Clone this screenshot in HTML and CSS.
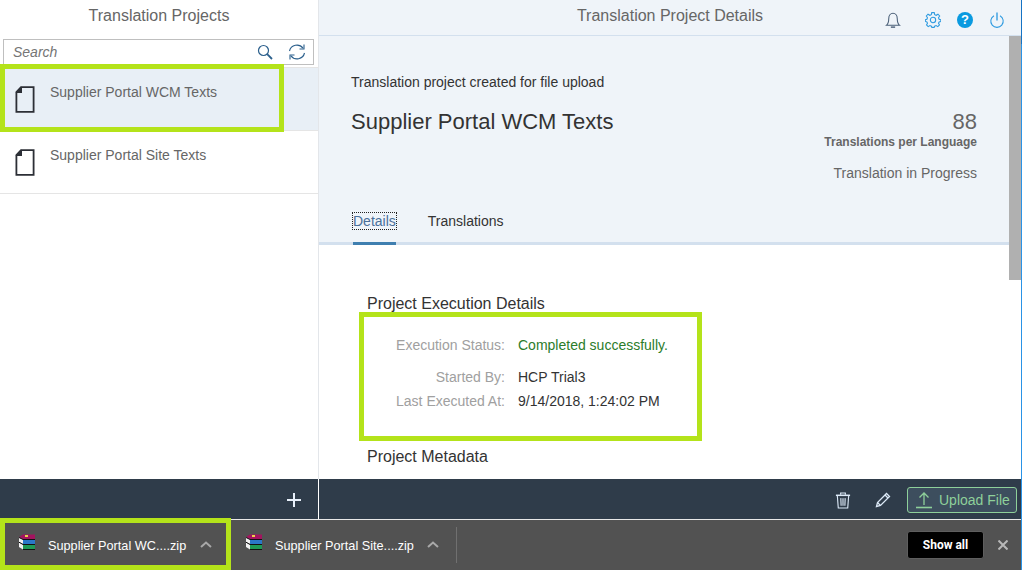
FILE: index.html
```html
<!DOCTYPE html>
<html lang="en">
<head>
    <meta charset="UTF-8">
    <meta name="viewport" content="width=device-width, initial-scale=1.0">
    <title>Translation Projects</title>
    <link rel="stylesheet" href="styles.css">
</head>
<body>

    <div class="window">
        <div class="app">
            <!-- Master list -->
            <div class="master">
                <div class="pane-title">Translation Projects</div>
                <div class="search">
                    <span class="search-text">Search</span>
                    <svg class="search-icon" width="16" height="16" viewBox="0 0 16 16" fill="none" stroke="#2b5f8c" stroke-width="1.2">
                        <circle cx="6.5" cy="6.5" r="5"/>
                        <path d="M10.2 10.2L15 15" stroke-width="1.8"/>
                    </svg>
                    <svg class="refresh-icon" width="18" height="18" viewBox="0 0 18 18" fill="none" stroke="#2b5f8c" stroke-width="1.1">
                        <path d="M1.5 8A7.6 7.6 0 0 1 15 5.2"/>
                        <path d="M16 1.5V6H11.5"/>
                        <path d="M16.5 10A7.6 7.6 0 0 1 3 12.8"/>
                        <path d="M2 16.5V12H6.5"/>
                    </svg>
                </div>
                <div class="project-list">
                    <div class="project selected">
                        <svg class="doc-icon" width="20" height="27" viewBox="0 0 20 27">
                            <path d="M6 1.2H18.6V25.8H1.4V6Z" fill="none" stroke="#2c2f36" stroke-width="1.8"/>
                            <path d="M7 0.5L0.5 7H7Z" fill="#2c2f36"/>
                        </svg>
                        <span class="project-name">Supplier Portal WCM Texts</span>
                    </div>
                    <div class="project">
                        <svg class="doc-icon" width="20" height="27" viewBox="0 0 20 27">
                            <path d="M6 1.2H18.6V25.8H1.4V6Z" fill="none" stroke="#2c2f36" stroke-width="1.8"/>
                            <path d="M7 0.5L0.5 7H7Z" fill="#2c2f36"/>
                        </svg>
                        <span class="project-name">Supplier Portal Site Texts</span>
                    </div>
                </div>
                <div class="footer master-footer">
                    <svg width="14" height="14" viewBox="0 0 14 14"><path d="M7 0V14M0 7H14" stroke="#e8f0fa" stroke-width="2"/></svg>
                </div>
            </div>

            <!-- Detail pane -->
            <div class="detail">
                <div class="detail-bar">
                    <span class="detail-title">Translation Project Details</span>
                    <div class="bar-icons">
                        <svg class="bell-icon" width="16" height="16" viewBox="0 0 18 18" fill="none" stroke="#4a5f78" stroke-width="1.2">
                            <path d="M1.5 15C4 13 4.2 10.5 4.2 7.5C4.2 4.3 6.2 1.5 9 1.5C11.8 1.5 13.8 4.3 13.8 7.5C13.8 10.5 14 13 16.5 15Z"/>
                            <path d="M6.6 17H11.4" stroke-width="1.6"/>
                        </svg>
                        <svg width="16" height="16" viewBox="0 0 18 18" fill="none" stroke="#2d9ae0" stroke-width="1.2">
                            <path d="M7.6 1.2H10.4L10.9 3.5L12.6 4.2L14.6 3L16.5 5L15.2 7L15.9 8.6L17.8 9.2V11.1L15.9 11.6L15.2 13.2L16.3 15.1L14.4 17L12.5 15.8L10.8 16.5L10.3 17.8H7.7L7.2 16.5L5.5 15.8L3.6 17L1.7 15.1L2.8 13.2L2.1 11.6L0.4 11.1V9.2L2.1 8.6L2.8 7L1.5 5L3.4 3L5.4 4.2L7.1 3.5Z" transform="translate(0 -0.5)"/>
                            <circle cx="9" cy="9" r="3"/>
                        </svg>
                        <span class="help-icon">?</span>
                        <svg width="16" height="16" viewBox="-1 0 18 18" fill="none" stroke="#2d9ae0" stroke-width="1.2">
                            <path d="M4.6 4.2A7 7 0 1 0 11.4 4.2"/>
                            <path d="M8 0.5V9.5" stroke-width="1.5"/>
                        </svg>
                    </div>
                </div>

                <div class="detail-scroll">
                    <div class="detail-content">
                        <div class="object-header">
                            <div class="object-top">
                                <div class="object-main">
                                    <p class="object-intro">Translation project created for file upload</p>
                                    <h1 class="object-title">Supplier Portal WCM Texts</h1>
                                </div>
                                <div class="object-side">
                                    <div class="object-number">88</div>
                                    <div class="object-unit">Translations per Language</div>
                                    <div class="object-status">Translation in Progress</div>
                                </div>
                            </div>
                            <div class="tabs">
                                <div class="tab active"><span class="tab-focus">Details</span></div>
                                <div class="tab">Translations</div>
                            </div>
                        </div>
                        <div class="sections">
                            <h2 class="section-title">Project Execution Details</h2>
                            <div class="fields">
                                <span class="field-label status-row">Execution Status:</span>
                                <span class="field-value status-row success">Completed successfully.</span>
                                <span class="field-label">Started By:</span>
                                <span class="field-value">HCP Trial3</span>
                                <span class="field-label">Last Executed At:</span>
                                <span class="field-value">9/14/2018, 1:24:02 PM</span>
                            </div>
                            <h2 class="section-title metadata-title">Project Metadata</h2>
                        </div>
                    </div>
                    <div class="scroll-track"><div class="scroll-thumb"></div></div>
                </div>

                <div class="footer detail-footer">
                    <svg class="trash" width="16" height="17" viewBox="0 0 16 18" fill="none" stroke="#dce9f7" stroke-width="1.2">
                        <path d="M0.5 3.5H15.5" stroke-width="1.6"/>
                        <path d="M5.5 3V1H10.5V3"/>
                        <path d="M2 4L3 17H13L14 4"/>
                        <path d="M5.7 6.5L6 14.5M8 6.5V14.5M10.3 6.5L10 14.5"/>
                    </svg>
                    <svg class="pencil" width="16" height="16" viewBox="0 0 16 16" fill="none" stroke="#dce9f7" stroke-width="1.3">
                        <path d="M1.5 14.5L2.5 10.5L11.5 1.5L14.5 4.5L5.5 13.5Z"/>
                        <path d="M2.5 10.5L5.5 13.5M10 3L13 6"/>
                    </svg>
                    <button class="upload-button">
                        <svg width="18" height="18" viewBox="0 0 18 18" fill="none" stroke="#8ed09a" stroke-width="1.3">
                            <path d="M9 14V2M4.5 6.5L9 2L13.5 6.5"/>
                            <path d="M1 16.5H17" stroke-width="1.6"/>
                        </svg>
                        Upload File
                    </button>
                </div>
            </div>
        </div>

        <!-- Browser download shelf -->
        <div class="download-bar">
            <div class="download">
                <svg class="rar-icon" width="17" height="17" viewBox="0 0 17 17">
                    <path d="M0 3L4 0.5H16V5H4Z" fill="#a3145f"/>
                    <rect x="4" y="6" width="12" height="4" fill="#2a78c8"/>
                    <rect x="4" y="11" width="12" height="4" fill="#1f9a55"/>
                    <path d="M0 3.5L4 5.5V10L0 8ZM0 8.5L4 10.5V15.5L0 13Z" fill="#f2f2f2"/>
                    <path d="M4 15.5H16M4 10.5H16M4 5.5H16M0 3.5L4 5.5M0 8.2L4 10.5" stroke="#111" stroke-width="1"/>
                    <rect x="6" y="1" width="3" height="2" fill="#e8d24a"/>
                </svg>
                <span class="download-name">Supplier Portal WC....zip</span>
                <svg class="chevron" width="12" height="7" viewBox="0 0 12 7" fill="none" stroke="#a8a8a8" stroke-width="2"><path d="M1 6L6 1.5L11 6"/></svg>
            </div>
            <div class="download second">
                <svg class="rar-icon" width="17" height="17" viewBox="0 0 17 17">
                    <path d="M0 3L4 0.5H16V5H4Z" fill="#a3145f"/>
                    <rect x="4" y="6" width="12" height="4" fill="#2a78c8"/>
                    <rect x="4" y="11" width="12" height="4" fill="#1f9a55"/>
                    <path d="M0 3.5L4 5.5V10L0 8ZM0 8.5L4 10.5V15.5L0 13Z" fill="#f2f2f2"/>
                    <path d="M4 15.5H16M4 10.5H16M4 5.5H16M0 3.5L4 5.5M0 8.2L4 10.5" stroke="#111" stroke-width="1"/>
                    <rect x="6" y="1" width="3" height="2" fill="#e8d24a"/>
                </svg>
                <span class="download-name">Supplier Portal Site....zip</span>
                <svg class="chevron" width="12" height="7" viewBox="0 0 12 7" fill="none" stroke="#a8a8a8" stroke-width="2"><path d="M1 6L6 1.5L11 6"/></svg>
            </div>
            <div class="shelf-divider"></div>
            <button class="show-all">Show all</button>
            <svg class="shelf-close" width="10" height="10" viewBox="0 0 10 10" stroke="#b8b8b8" stroke-width="2"><path d="M0.5 0.5L9.5 9.5M9.5 0.5L0.5 9.5"/></svg>
        </div>

        <!-- Green annotation boxes from the screenshot author -->
        <div class="mark mark-project"></div>
        <div class="mark mark-execution"></div>
        <div class="mark mark-download"></div>
    </div>

</body>
</html>
```

FILE: styles.css
```css
:root {
    --header-bg: #eff4f9;
    --line-color: #d3e0ee;
    --footer-bg: #2f3c4a;
    --shelf-bg: #525252;
    --mark-color: #b4e31a;
    --text-color: #333333;
    --muted-color: #666666;
}

body {
    margin: 0;
    padding: 0;
    background-color: white;
    color: var(--text-color);
    font-family: "Liberation Sans", Arial, sans-serif;
    overflow: hidden;
}

.window {
    position: relative;
    display: flex;
    flex-direction: column;
    width: 1021px;
    height: 570px;
    border-right: 1px solid #2a93e6;
    border-image: linear-gradient(#1573c4 45px, #2a93e6 45px) 1;
}

.app {
    display: flex;
    height: 519px;
}

/* Master list */
.master {
    display: flex;
    flex-direction: column;
    width: 318px;
    border-right: 1px solid #e3e6ea;
}

.pane-title {
    height: 35px;
    line-height: 31px;
    text-align: center;
    font-size: 16px;
    color: var(--muted-color);
}

.search {
    display: flex;
    align-items: center;
    height: 24px;
    margin: 4px 4px 2px 3px;
    padding: 0 9px;
    border: 1px solid #bfbfbf;
}

.search-text {
    flex: 1;
    font-size: 14px;
    font-style: italic;
    color: #757575;
}

.search-icon {
    margin-right: 15px;
}

.refresh-icon {
    margin-right: -2px;
}

.project-list {
    flex: 1;
    border-top: 1px solid #e5e5e5;
}

.project {
    display: flex;
    height: 62px;
    padding-left: 15px;
    border-bottom: 1px solid #e5e5e5;
}

.project.selected {
    background: #e8eff6;
}

.doc-icon {
    margin-top: 18px;
}

.project-name {
    margin: 16px 0 0 15px;
    font-size: 14px;
    color: var(--muted-color);
}

.footer {
    display: flex;
    align-items: center;
    flex-shrink: 0;
    box-sizing: border-box;
    height: 40px;
    padding-top: 2px;
    background: var(--footer-bg);
}

.master-footer {
    justify-content: flex-end;
    margin-right: -1px;
    padding-right: 17px;
    border-right: 1px solid #ffffff;
}

/* Detail pane */
.detail {
    display: flex;
    flex-direction: column;
    flex: 1;
    min-width: 0;
}

.detail-bar {
    position: relative;
    display: flex;
    justify-content: center;
    flex-shrink: 0;
    height: 35px;
    background: var(--header-bg);
    border-bottom: 1px solid var(--line-color);
}

.detail-title {
    font-size: 16px;
    line-height: 31px;
    color: var(--muted-color);
}

.bar-icons {
    position: absolute;
    top: 12px;
    right: 16px;
    display: flex;
    align-items: center;
    gap: 16px;
}

.bell-icon {
    margin-right: 8px;
}

.help-icon {
    width: 16px;
    height: 16px;
    border-radius: 50%;
    background: #0a9ae0;
    color: white;
    font-size: 13px;
    font-weight: bold;
    line-height: 16px;
    text-align: center;
}

.detail-scroll {
    display: flex;
    flex: 1;
    min-height: 0;
}

.detail-content {
    flex: 1;
    min-width: 0;
    overflow: hidden;
}

.scroll-track {
    width: 12px;
    flex-shrink: 0;
}

.scroll-thumb {
    height: 244px;
    background: #b0b0b0;
}

.object-header {
    height: 209px;
    box-sizing: border-box;
    background: var(--header-bg);
    border-bottom: 3px solid var(--line-color);
}

.object-top {
    display: flex;
    justify-content: space-between;
    height: 161px;
    padding: 0 32px;
    box-sizing: border-box;
}

.object-intro {
    margin: 38px 0 0;
    font-size: 14px;
    line-height: 16px;
    color: var(--text-color);
}

.object-title {
    margin: 19px 0 0;
    font-size: 22px;
    font-weight: normal;
    line-height: 26px;
    color: var(--text-color);
}

.object-side {
    text-align: right;
    color: var(--muted-color);
}

.object-number {
    margin-top: 73px;
    font-size: 22px;
    line-height: 26px;
}

.object-unit {
    font-size: 12px;
    font-weight: bold;
    line-height: 14px;
}

.object-status {
    margin-top: 16px;
    font-size: 14px;
    line-height: 16px;
}

.tabs {
    display: flex;
    gap: 32px;
    height: 48px;
    padding-left: 34px;
}

.tab {
    box-sizing: border-box;
    height: 48px;
    padding-top: 16px;
    font-size: 14px;
    line-height: 16px;
    color: var(--text-color);
}

.tab.active {
    border-bottom: 3px solid #3f7fb0;
    color: #4a6f9a;
}

.tab-focus {
    outline: 1px dotted #222222;
}

.sections {
    padding: 50px 0 0 48px;
}

.section-title {
    margin: 0;
    font-size: 16px;
    font-weight: normal;
    line-height: 18px;
    color: var(--text-color);
}

.fields {
    display: grid;
    grid-template-columns: 138px 1fr;
    column-gap: 13px;
    margin-top: 24px;
    font-size: 14px;
    line-height: 16px;
}

.field-label {
    margin-bottom: 8px;
    text-align: right;
    color: #a0a0a0;
}

.field-value {
    margin-bottom: 8px;
}

.status-row {
    margin-bottom: 16px;
}

.success {
    color: #2b7c2b;
}

.metadata-title {
    margin-top: 31px;
}

.detail-footer {
    justify-content: flex-end;
    gap: 16px;
    padding-right: 4px;
}

.trash {
    margin-right: 8px;
}

.upload-button {
    display: flex;
    align-items: center;
    gap: 6px;
    width: 110px;
    height: 26px;
    padding: 0 0 0 7px;
    background: #3d4e5e;
    border: 1px solid #8ed09a;
    border-radius: 3px;
    color: #8ed09a;
    font-family: inherit;
    font-size: 14px;
}

/* Download shelf */
.download-bar {
    display: flex;
    align-items: center;
    flex: 1;
    background: var(--shelf-bg);
    border-top: 1px solid #e8e8e8;
    box-sizing: border-box;
}

.download {
    display: flex;
    align-items: center;
    height: 100%;
    padding-left: 19px;
}

.download.second {
    padding-left: 34px;
}

.rar-icon {
    margin-top: -5px;
}

.download-name {
    flex-shrink: 0;
    width: 137px;
    margin: 2px 0 0 12px;
    font-size: 12.7px;
    white-space: nowrap;
    color: white;
}

.chevron {
    margin: -2px 0 0 15px;
}

.shelf-divider {
    width: 1px;
    height: 36px;
    margin-left: 17px;
    background: #707070;
}

.show-all {
    width: 77px;
    height: 28px;
    margin-left: auto;
    padding: 0;
    background: black;
    border: 1px solid #5e5e5e;
    border-radius: 3px;
    color: white;
    font-family: Roboto, sans-serif;
    font-size: 12px;
    font-weight: bold;
}

.shelf-close {
    margin: 0 13px 0 14px;
}

/* Annotation overlays */
.mark {
    position: absolute;
    box-sizing: border-box;
    border: 5px solid var(--mark-color);
}

.mark-project {
    left: 0;
    top: 64px;
    width: 284px;
    height: 68px;
}

.mark-execution {
    left: 359px;
    top: 312px;
    width: 343px;
    height: 129px;
}

.mark-download {
    left: 0;
    top: 518px;
    width: 231px;
    height: 52px;
}
```
